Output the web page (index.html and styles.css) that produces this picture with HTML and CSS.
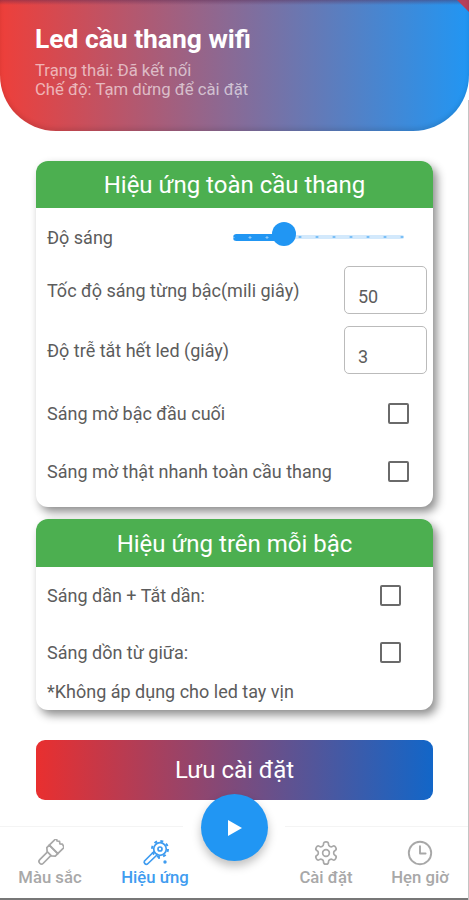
FILE: index.html
```html
<!DOCTYPE html>
<html lang="en">
<head>
    <meta charset="UTF-8">
    <meta name="viewport" content="width=device-width, initial-scale=1.0">
    <title>Led cầu thang wifi</title>
    <link rel="stylesheet" href="styles.css">
</head>
<body>
<div class="app">
    <header class="top">
        <h1>Led cầu thang wifi</h1>
        <p>Trạng thái: Đã kết nối</p>
        <p>Chế độ: Tạm dừng để cài đặt</p>
    </header>

    <main class="content">
        <section class="card card-all">
            <h2>Hiệu ứng toàn cầu thang</h2>
            <div class="row row-slider">
                <span>Độ sáng</span>
                <div class="slider">
                    <div class="slider-fill"></div>
                    <div class="slider-rest"></div>
                    <div class="slider-thumb"></div>
                </div>
            </div>
            <div class="row row-input">
                <span>Tốc độ sáng từng bậc(mili giây)</span>
                <div class="num">50</div>
            </div>
            <div class="row row-input">
                <span>Độ trễ tắt hết led (giây)</span>
                <div class="num">3</div>
            </div>
            <div class="row row-check">
                <span>Sáng mờ bậc đầu cuối</span>
                <div class="check"></div>
            </div>
            <div class="row row-check">
                <span>Sáng mờ thật nhanh toàn cầu thang</span>
                <div class="check"></div>
            </div>
        </section>

        <section class="card card-step">
            <h2>Hiệu ứng trên mỗi bậc</h2>
            <div class="row row-step">
                <span>Sáng dần + Tắt dần:</span>
                <div class="check"></div>
            </div>
            <div class="row row-step">
                <span>Sáng dồn từ giữa:</span>
                <div class="check"></div>
            </div>
            <p class="note">*Không áp dụng cho led tay vịn</p>
        </section>

        <button class="save">Lưu cài đặt</button>
    </main>

    <nav class="bottom">
        <div class="tab">
            <svg viewBox="0 0 28 28" width="28" height="28" fill="none" stroke="currentColor" stroke-width="1.7" stroke-linejoin="round">
                <g transform="rotate(45 14 14)">
                    <path d="M8 -1l2.500 1.500 2-1.500 2 1.500 2-1.500 3.500 1v9h-12z"/>
                    <path d="M8 9h12v3.500l-3 2.500h-6l-3-2.500z"/>
                    <path d="M11.500 15v11a2.500 2.500 0 0 0 5 0v-11"/>
                </g>
            </svg>
            <span>Màu sắc</span>
        </div>
        <div class="tab active">
            <svg viewBox="0 0 28 28" width="28" height="28" fill="none" stroke="currentColor" stroke-width="1.7" stroke-linejoin="round">
                <path d="M13.500 12l-10 10a2.200 2.200 0 0 0 3 3l10.500-10"/>
                <circle cx="19" cy="10" r="6.300"/>
                <circle cx="19" cy="10" r="8" stroke-width="2" stroke-dasharray="3 3.300"/>
                <circle cx="19" cy="10" r="2"/>
                <circle cx="18" cy="19" r="1.100" fill="currentColor" stroke="none"/>
                <circle cx="24" cy="23" r="1.700" fill="currentColor" stroke="none"/>
            </svg>
            <span>Hiệu ứng</span>
        </div>
        <div class="tab-gap"></div>
        <div class="tab">
            <svg viewBox="-0.500 -0.500 25 25" width="28" height="28" fill="none" stroke="currentColor" stroke-width="1.500" stroke-linejoin="round">
                <path d="M12.220 2h-.44a2 2 0 0 0-2 2v.18a2 2 0 0 1-1 1.730l-.43.25a2 2 0 0 1-2 0l-.15-.08a2 2 0 0 0-2.730.73l-.22.38a2 2 0 0 0 .73 2.730l.15.1a2 2 0 0 1 1 1.720v.51a2 2 0 0 1-1 1.740l-.15.09a2 2 0 0 0-.73 2.730l.22.38a2 2 0 0 0 2.730.73l.15-.08a2 2 0 0 1 2 0l.43.25a2 2 0 0 1 1 1.730V20a2 2 0 0 0 2 2h.44a2 2 0 0 0 2-2v-.18a2 2 0 0 1 1-1.730l.43-.25a2 2 0 0 1 2 0l.15.08a2 2 0 0 0 2.730-.73l.22-.39a2 2 0 0 0-.73-2.730l-.15-.08a2 2 0 0 1-1-1.740v-.5a2 2 0 0 1 1-1.740l.15-.09a2 2 0 0 0 .73-2.730l-.22-.38a2 2 0 0 0-2.730-.73l-.15.08a2 2 0 0 1-2 0l-.43-.25a2 2 0 0 1-1-1.730V4a2 2 0 0 0-2-2z"/>
                <circle cx="12" cy="12" r="3"/>
            </svg>
            <span>Cài đặt</span>
        </div>
        <div class="tab">
            <svg viewBox="-0.500 -0.500 25 25" width="28" height="28" fill="none" stroke="currentColor" stroke-width="1.700" stroke-linecap="round" stroke-linejoin="round">
                <circle cx="12" cy="12" r="10"/>
                <path d="M12 6v6.500h5"/>
            </svg>
            <span>Hẹn giờ</span>
        </div>
    </nav>

    <!-- nut play nam de len thanh duoi -->
    <button class="fab">
        <svg viewBox="0 0 18 18" width="18" height="18"><path d="M2 1l14 8-14 8z" fill="#fff"/></svg>
    </button>
</div>
</body>
</html>
```

FILE: styles.css
```css
* {
    margin: 0;
    padding: 0;
    box-sizing: border-box;
}

body {
    font-family: Roboto, 'Noto Sans', sans-serif;
    background-color: #fff;
    color: #5c5c5c;
}

.app {
    position: relative;
    display: flex;
    flex-direction: column;
    width: 469px;
    height: 900px;
    overflow: hidden;
}

/* thin grey edge of the screenshot, right and bottom */
.app::after {
    content: "";
    position: absolute;
    top: 100px;
    right: 0;
    bottom: 0;
    left: 0;
    box-shadow: inset -1px 0 0 #c4c4c4, inset 0 -2px 0 #777;
    pointer-events: none;
}

/* Header */
.top {
    height: 131px;
    padding: 24px 35px 0;
    background:
        linear-gradient(225deg, #b5405a 8px, transparent 9px),
        linear-gradient(180deg, rgba(90, 40, 80, 0.45), transparent 5px),
        linear-gradient(90deg, #ee3f3a, #2196f3);
    border-radius: 0 0 56px 56px;
    box-shadow: inset 0 -3px 4px rgba(0, 0, 0, 0.1);
    color: rgba(255, 255, 255, 0.6);
    font-size: 16.7px;
    line-height: 19px;
}

.top h1 {
    color: #fff;
    font-size: 26.4px;
    line-height: 30px;
    font-weight: 700;
    margin-bottom: 7px;
}

/* Cards */
.content {
    flex: 1;
    display: flex;
    flex-direction: column;
    padding: 30px 36px 0;
}

.card {
    background-color: #fff;
    border-radius: 12px;
    box-shadow: 4px 5px 10px rgba(0, 0, 0, 0.45);
    overflow: hidden;
}

.card-all {
    height: 346px;
    margin-bottom: 12px;
}

.card-step {
    height: 191px;
    margin-bottom: 30px;
}

.card h2 {
    height: 47px;
    background-color: #4caf50;
    color: #fff;
    font-size: 24px;
    line-height: 49px;
    font-weight: 400;
    text-align: center;
}

.card-step h2 {
    height: 48px;
    line-height: 50px;
}

.row {
    display: flex;
    align-items: center;
    justify-content: space-between;
    padding: 0 11px;
    font-size: 18px;
}

.row-slider {
    height: 55px;
    padding-top: 3px;
    padding-right: 29px;
}

.row-input {
    height: 60px;
    padding-right: 6px;
    padding-bottom: 6px;
}

.row-check {
    height: 58px;
    padding-right: 24px;
}

.row-input + .row-check {
    margin-top: 1px;
}

.row-step {
    height: 57px;
    padding-right: 32px;
}

.num {
    width: 83px;
    height: 48px;
    padding: 19px 0 0 13px;
    border: 1.5px solid #bbb;
    border-radius: 5px;
    line-height: 21px;
}

.check {
    width: 21px;
    height: 21px;
    border: 2px solid #6a6a6a;
    border-radius: 2px;
}

.note {
    margin-top: 1px;
    padding: 0 11px;
    font-size: 18px;
    line-height: 20px;
}

/* Slider */
.slider {
    display: flex;
    align-items: center;
    position: relative;
    width: 171px;
}

.slider-fill {
    width: 52px;
    height: 7px;
    background-color: #2196f3;
    background-image: radial-gradient(circle, #90caf9 1px, transparent 1.3px);
    background-size: 17px 7px;
    background-position: 8.5px 0;
    border-radius: 4px 0 0 4px;
}

.slider-rest {
    flex: 1;
    height: 4px;
    background-color: #d3e9fc;
    background-image: radial-gradient(circle, #64b5f6 1px, transparent 1.3px);
    background-size: 17px 4px;
    background-position: 6.5px 0;
    border-radius: 0 2px 2px 0;
}

.slider-thumb {
    position: absolute;
    left: 39px;
    top: -12px;
    width: 24px;
    height: 24px;
    background-color: #2196f3;
    border-radius: 50%;
}

/* Save button */
.save {
    height: 60px;
    border: none;
    border-radius: 9px;
    background: linear-gradient(90deg, #e92f2f, #1266c8);
    color: #fff;
    font-family: inherit;
    font-size: 24px;
}

/* Bottom nav */
.bottom {
    position: relative;
    display: grid;
    grid-template-columns: 100px 110px 69px 94px 94px;
    height: 74px;
    padding-top: 12px;
    background-color: #fff;
    color: #a8a8a8;
    border-top: 1px solid #f4f4f4;
}

/* gap in the top line around the play button */
.bottom::before {
    content: "";
    position: absolute;
    left: 183px;
    top: -1px;
    width: 102px;
    height: 2px;
    background-color: #fff;
}

.tab {
    display: flex;
    flex-direction: column;
    align-items: center;
    font-size: 16.7px;
    line-height: 21px;
    font-weight: 500;
}

.tab.active {
    color: #3f9cf0;
}

.fab {
    position: absolute;
    left: 201px;
    top: 794px;
    width: 67px;
    height: 67px;
    border: none;
    border-radius: 50%;
    background-color: #2196f3;
    box-shadow: 0 5px 10px rgba(0, 0, 0, 0.25);
    display: flex;
    align-items: center;
    justify-content: center;
}
```
